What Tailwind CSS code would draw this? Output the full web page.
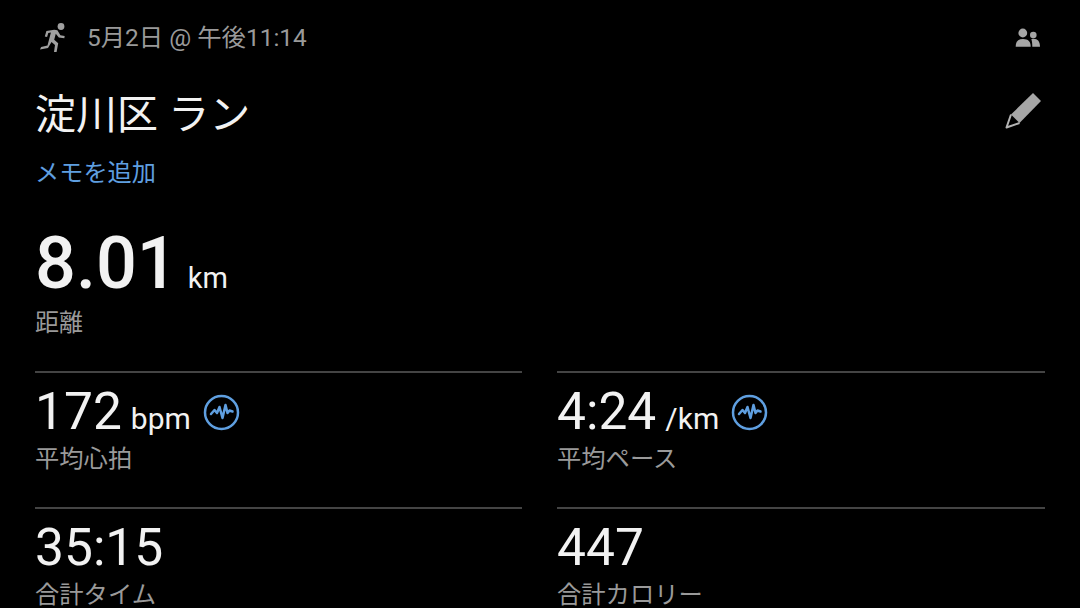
<!DOCTYPE html>
<html lang="ja">
<head>
  <meta charset="UTF-8" />
  <script src="https://cdn.jsdelivr.net/npm/@tailwindcss/browser@4"></script>
  <title>淀川区 ラン</title>
</head>
<body class="bg-black">
  <main class="w-[1080px] h-[608px] overflow-hidden bg-black font-['Roboto','Noto_Sans_CJK_JP',sans-serif] text-[#f2f2f2]">
    <!-- activity type, date, people -->
    <header class="flex items-center h-[38px] mt-[19px] pl-[39px] pr-[39px]">
      <svg class="w-[30px] h-[30px]" viewBox="0 0 30 30" fill="#a0a0a0">
        <circle cx="22" cy="3.500" r="3.400"/>
        <path d="M1 26.500l8-1.500 3.500-6 3.500 3-1 7h2.600l1.600-8.800-4-3.400 1.600-6 3 3.700 5.500 .8.400-2.400-4.300-.7-3-5-3.200-.5-7.800 1.200-1.600 5.500 2.300.6 1.200-4 2.600-.4-3.400 12.800-6.400 1.700z"/>
      </svg>
      <span class="ml-[18px] text-[24.400px] text-[#9a9a9a] leading-none">5月2日 @ 午後11:14</span>
      <svg class="ml-auto w-[26px] h-[22px]" viewBox="0 0 26 22" fill="#a6a6a6">
        <circle cx="7.800" cy="6" r="4.400"/>
        <circle cx="18.300" cy="8" r="3.300"/>
        <path d="M0.700 19.700c0-5 2-7.700 7.300-7.700s7.700 2.700 7.700 7.700z"/>
        <path d="M16.300 12.300c.8-.4 1.600-.5 2.400-.5 4 0 6.300 3 6.300 7.900h-7.700c0-3-.2-5.400-1-7.400z"/>
      </svg>
    </header>

    <!-- title and memo -->
    <section class="flex items-start justify-between pl-[35px] pr-[38px] mt-[31px]">
      <div>
        <h1 class="text-[41px] leading-[54px] font-normal">淀川区 ラン</h1>
        <p class="mt-[15px] text-[24.200px] leading-[32px] text-[#5f9fe0]">メモを追加</p>
      </div>
      <svg class="w-[38px] h-[38px] mt-[4px]" viewBox="0 0 38 38">
        <path fill="#a6a6a6" d="M29 1l8 8-21.500 22-8.500-8.500z"/>
        <path fill="none" stroke="#b4b4b4" stroke-width="2" stroke-linejoin="round" d="M7 22.500l-4.500 13 13-4.500"/>
      </svg>
    </section>

    <!-- distance -->
    <section class="pl-[35px] mt-[35px]">
      <div class="flex items-baseline h-[80px]">
        <span class="text-[72px] leading-[80px] font-medium">8.01</span>
        <span class="ml-[10px] text-[29px]">km</span>
      </div>
      <p class="mt-[3px] text-[24px] leading-[32px] text-[#9a9a9a]">距離</p>
    </section>

    <!-- stat tiles -->
    <section class="grid grid-cols-[487px_488px] gap-x-[35px] pl-[35px] mt-[32px]">
      <div class="border-t-2 border-[#444] h-[136px] pt-[10px]">
        <div class="flex items-baseline h-[58px]">
          <span class="text-[51.500px] leading-[58px]">172</span>
          <span class="ml-[9px] text-[30px]">bpm</span>
          <svg class="self-center ml-[12px] w-[37px] h-[37px]" viewBox="0 0 37 37" fill="none" stroke="#5f9fe0">
            <circle cx="18.500" cy="18.500" r="16.500" stroke-width="2.500"/>
            <path stroke-width="2.500" stroke-linejoin="round" stroke-linecap="round" d="M8 20l3.500-4 2.500 3 2.500-6 3 11 3-13 2 8 2-2.500 3 1"/>
          </svg>
        </div>
        <p class="mt-[2px] text-[24.300px] leading-[32px] text-[#9a9a9a]">平均心拍</p>
      </div>
      <div class="border-t-2 border-[#444] h-[136px] pt-[10px]">
        <div class="flex items-baseline h-[58px]">
          <span class="text-[51.500px] leading-[58px]">4:24</span>
          <span class="ml-[9px] text-[30px]">/km</span>
          <svg class="self-center ml-[12px] w-[37px] h-[37px]" viewBox="0 0 37 37" fill="none" stroke="#5f9fe0">
            <circle cx="18.500" cy="18.500" r="16.500" stroke-width="2.500"/>
            <path stroke-width="2.500" stroke-linejoin="round" stroke-linecap="round" d="M8 20l3.500-4 2.500 3 2.500-6 3 11 3-13 2 8 2-2.500 3 1"/>
          </svg>
        </div>
        <p class="mt-[2px] text-[24.300px] leading-[32px] text-[#9a9a9a]">平均ペース</p>
      </div>
      <div class="border-t-2 border-[#444] h-[136px] pt-[10px]">
        <div class="h-[58px] text-[51.500px] leading-[58px]">35:15</div>
        <p class="mt-[2px] text-[24.300px] leading-[32px] text-[#9a9a9a]">合計タイム</p>
      </div>
      <div class="border-t-2 border-[#444] h-[136px] pt-[10px]">
        <div class="h-[58px] text-[51.500px] leading-[58px]">447</div>
        <p class="mt-[2px] text-[24.300px] leading-[32px] text-[#9a9a9a]">合計カロリー</p>
      </div>
    </section>
  </main>
</body>
</html>
